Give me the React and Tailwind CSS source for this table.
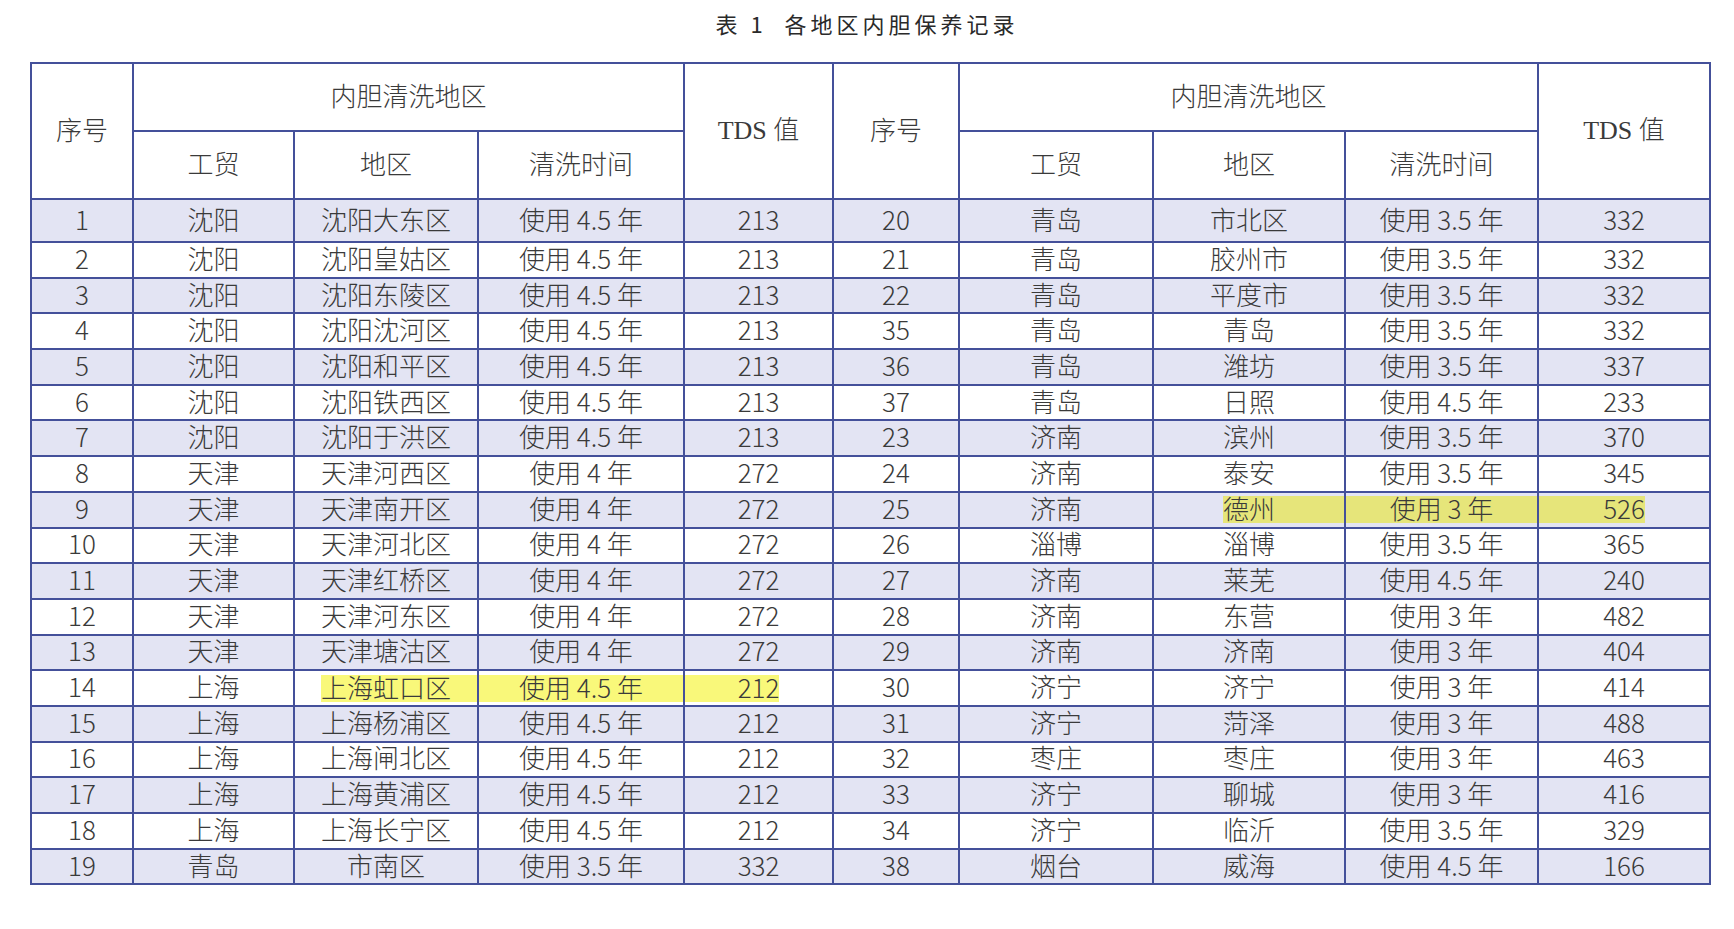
import React from "react";

const left = [
  ["1", "沈阳", "沈阳大东区", "使用 4.5 年", "213"],
  ["2", "沈阳", "沈阳皇姑区", "使用 4.5 年", "213"],
  ["3", "沈阳", "沈阳东陵区", "使用 4.5 年", "213"],
  ["4", "沈阳", "沈阳沈河区", "使用 4.5 年", "213"],
  ["5", "沈阳", "沈阳和平区", "使用 4.5 年", "213"],
  ["6", "沈阳", "沈阳铁西区", "使用 4.5 年", "213"],
  ["7", "沈阳", "沈阳于洪区", "使用 4.5 年", "213"],
  ["8", "天津", "天津河西区", "使用 4 年", "272"],
  ["9", "天津", "天津南开区", "使用 4 年", "272"],
  ["10", "天津", "天津河北区", "使用 4 年", "272"],
  ["11", "天津", "天津红桥区", "使用 4 年", "272"],
  ["12", "天津", "天津河东区", "使用 4 年", "272"],
  ["13", "天津", "天津塘沽区", "使用 4 年", "272"],
  ["14", "上海", "上海虹口区", "使用 4.5 年", "212"],
  ["15", "上海", "上海杨浦区", "使用 4.5 年", "212"],
  ["16", "上海", "上海闸北区", "使用 4.5 年", "212"],
  ["17", "上海", "上海黄浦区", "使用 4.5 年", "212"],
  ["18", "上海", "上海长宁区", "使用 4.5 年", "212"],
  ["19", "青岛", "市南区", "使用 3.5 年", "332"],
];

const right = [
  ["20", "青岛", "市北区", "使用 3.5 年", "332"],
  ["21", "青岛", "胶州市", "使用 3.5 年", "332"],
  ["22", "青岛", "平度市", "使用 3.5 年", "332"],
  ["35", "青岛", "青岛", "使用 3.5 年", "332"],
  ["36", "青岛", "潍坊", "使用 3.5 年", "337"],
  ["37", "青岛", "日照", "使用 4.5 年", "233"],
  ["23", "济南", "滨州", "使用 3.5 年", "370"],
  ["24", "济南", "泰安", "使用 3.5 年", "345"],
  ["25", "济南", "德州", "使用 3 年", "526"],
  ["26", "淄博", "淄博", "使用 3.5 年", "365"],
  ["27", "济南", "莱芜", "使用 4.5 年", "240"],
  ["28", "济南", "东营", "使用 3 年", "482"],
  ["29", "济南", "济南", "使用 3 年", "404"],
  ["30", "济宁", "济宁", "使用 3 年", "414"],
  ["31", "济宁", "菏泽", "使用 3 年", "488"],
  ["32", "枣庄", "枣庄", "使用 3 年", "463"],
  ["33", "济宁", "聊城", "使用 3 年", "416"],
  ["34", "济宁", "临沂", "使用 3.5 年", "329"],
  ["38", "烟台", "威海", "使用 4.5 年", "166"],
];

const widths = [102, 161, 184, 206, 149, 126, 194, 192, 193, 172];

function Cell({ text, hl, striped }) {
  // hl: undefined | "start" | "mid" | "end"
  const yellow = striped ? "bg-[#e6e57a]" : "bg-[#f9f87a]";
  if (!hl) {
    return (
      <td className="border-2 border-[#44509a] p-0 pb-[4px] text-center align-middle">
        {text}
      </td>
    );
  }
  return (
    <td className="border-2 border-[#44509a] p-0 align-middle">
      <div className="flex items-center">
        <div className={"flex-1 h-[27px] " + (hl === "start" ? "" : yellow)} />
        <span className={"h-[27px] leading-[24px] whitespace-nowrap " + yellow}>{text}</span>
        <div className={"flex-1 h-[27px] " + (hl === "end" ? "" : yellow)} />
      </div>
    </td>
  );
}

const th = "border-2 border-[#44509a] font-light pb-[4px]";

export default function App() {
  return (
    <div
      className="w-[1734px] h-[929px] bg-white text-[#3a3a3a] font-light"
      style={{ fontFamily: '"Liberation Sans Narrow", "Noto Sans CJK SC", sans-serif' }}
    >
      <div
        className="h-[46px] flex items-center justify-center text-[22px] tracking-[4px] text-[#2a2a2a] font-normal"
        style={{ fontFamily: '"Noto Sans CJK SC", sans-serif' }}
      >
        表 1&nbsp;&nbsp;各地区内胆保养记录
      </div>
      <table className="ml-[30px] mt-[16px] w-[1679px] table-fixed border-collapse border-2 border-[#44509a] text-[26px] leading-none">
        <colgroup>
          {widths.map((w, i) => (
            <col key={i} style={{ width: w + "px" }} />
          ))}
        </colgroup>
        <thead>
          <tr className="h-[68px]">
            <th rowSpan={2} className={th}>序号</th>
            <th colSpan={3} className={th}>内胆清洗地区</th>
            <th rowSpan={2} className={th}>
              <span style={{ fontFamily: '"Liberation Serif", "Noto Sans CJK SC", serif' }}>TDS 值</span>
            </th>
            <th rowSpan={2} className={th}>序号</th>
            <th colSpan={3} className={th}>内胆清洗地区</th>
            <th rowSpan={2} className={th}>
              <span style={{ fontFamily: '"Liberation Serif", "Noto Sans CJK SC", serif' }}>TDS 值</span>
            </th>
          </tr>
          <tr className="h-[68px]">
            <th className={th}>工贸</th>
            <th className={th}>地区</th>
            <th className={th}>清洗时间</th>
            <th className={th}>工贸</th>
            <th className={th}>地区</th>
            <th className={th}>清洗时间</th>
          </tr>
        </thead>
        <tbody>
          {left.map((l, i) => {
            const r = right[i];
            const striped = i % 2 === 0;
            const hlL = i === 13;
            const hlR = i === 8;
            return (
              <tr
                key={i}
                className={(i === 0 ? "h-[43px] " : "h-[35.7px] ") + (striped ? "bg-[#e3e4f3]" : "bg-white")}
              >
                <Cell text={l[0]} striped={striped} />
                <Cell text={l[1]} striped={striped} />
                <Cell text={l[2]} striped={striped} hl={hlL ? "start" : undefined} />
                <Cell text={l[3]} striped={striped} hl={hlL ? "mid" : undefined} />
                <Cell text={l[4]} striped={striped} hl={hlL ? "end" : undefined} />
                <Cell text={r[0]} striped={striped} />
                <Cell text={r[1]} striped={striped} />
                <Cell text={r[2]} striped={striped} hl={hlR ? "start" : undefined} />
                <Cell text={r[3]} striped={striped} hl={hlR ? "mid" : undefined} />
                <Cell text={r[4]} striped={striped} hl={hlR ? "end" : undefined} />
              </tr>
            );
          })}
        </tbody>
      </table>
    </div>
  );
}
